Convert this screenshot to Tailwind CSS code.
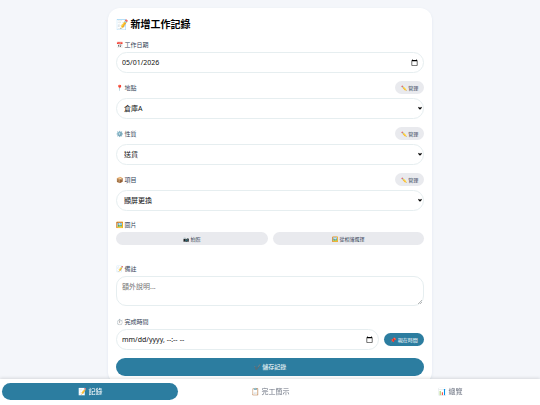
<!DOCTYPE html>
<html lang="zh-Hant">
  <head>
    <meta charset="UTF-8" />
    <title>工作記錄</title>
    <meta name="viewport" content="width=device-width, initial-scale=1" />
    <script src="https://cdn.jsdelivr.net/npm/@tailwindcss/browser@4"></script>
  </head>
  <body
    class="min-h-screen bg-[#f4f6fa] pt-2 font-['Noto_Sans','Noto_Sans_CJK_TC',sans-serif] text-[7px] leading-[10px] text-[#111111]"
  >
    <main
      class="mx-auto w-3/5 rounded-xl bg-white p-2 shadow-sm shadow-slate-200"
    >
      <h1 class="mb-2 text-[10px] leading-4 font-bold text-black">
        📝 新增工作記錄
      </h1>

      <form>
        <div class="mb-2">
          <label
            for="work-date"
            class="mb-0.5 block text-[6px] leading-[10px] text-[#334155]"
            >📅 工作日期</label
          >
          <input
            id="work-date"
            type="date"
            value="2026-05-01"
            class="h-[21px] w-full rounded-full border border-[#e6eef0] bg-white pr-[3px] pl-[5px] [&::-webkit-datetime-edit-day-field]:p-0 [&::-webkit-datetime-edit-month-field]:p-0 [&::-webkit-datetime-edit-year-field]:p-0"
          />
        </div>

        <div class="mb-2">
          <div class="mb-1 flex items-center justify-between">
            <label for="place" class="text-[6px] text-[#334155]">📍 地點</label>
            <button
              type="button"
              class="h-[13px] w-[29px] rounded-full bg-[#e9eaee] text-[5px] text-[#334155]"
            >
              ✏️ 管理
            </button>
          </div>
          <div class="relative">
            <select
              id="place"
              class="block h-[21px] w-full appearance-none rounded-full border border-[#e6eef0] bg-white px-[7px]"
            >
              <option>倉庫A</option>
            </select>
            <svg
              class="pointer-events-none absolute top-2 right-0.5 h-1 w-1"
              viewBox="0 0 8 8"
              fill="none"
              stroke="black"
              stroke-width="2.4"
              aria-hidden="true"
            >
              <path d="M1 2.5 4 5.8 7 2.5" />
            </svg>
          </div>
        </div>

        <div class="mb-2">
          <div class="mb-1 flex items-center justify-between">
            <label for="nature" class="text-[6px] text-[#334155]"
              >⚙️ 性質</label
            >
            <button
              type="button"
              class="h-[13px] w-[29px] rounded-full bg-[#e9eaee] text-[5px] text-[#334155]"
            >
              ✏️ 管理
            </button>
          </div>
          <div class="relative">
            <select
              id="nature"
              class="block h-[21px] w-full appearance-none rounded-full border border-[#e6eef0] bg-white px-[7px]"
            >
              <option>送貨</option>
            </select>
            <svg
              class="pointer-events-none absolute top-2 right-0.5 h-1 w-1"
              viewBox="0 0 8 8"
              fill="none"
              stroke="black"
              stroke-width="2.4"
              aria-hidden="true"
            >
              <path d="M1 2.5 4 5.8 7 2.5" />
            </svg>
          </div>
        </div>

        <div class="mb-[9px]">
          <div class="mb-1 flex items-center justify-between">
            <label for="item" class="text-[6px] text-[#334155]">📦 項目</label>
            <button
              type="button"
              class="h-[13px] w-[29px] rounded-full bg-[#e9eaee] text-[5px] text-[#334155]"
            >
              ✏️ 管理
            </button>
          </div>
          <div class="relative">
            <select
              id="item"
              class="block h-[21px] w-full appearance-none rounded-full border border-[#e6eef0] bg-white px-[7px]"
            >
              <option>顯屏更換</option>
            </select>
            <svg
              class="pointer-events-none absolute top-2 right-0.5 h-1 w-1"
              viewBox="0 0 8 8"
              fill="none"
              stroke="black"
              stroke-width="2.4"
              aria-hidden="true"
            >
              <path d="M1 2.5 4 5.8 7 2.5" />
            </svg>
          </div>
        </div>

        <div class="mb-[19px]">
          <p class="mb-0.5 text-[6px] leading-[10px] text-[#334155]">🖼️ 圖片</p>
          <div class="grid grid-cols-2 gap-[5px]">
            <button
              type="button"
              class="h-[13px] rounded-full bg-[#e9eaee] text-[5px] text-[#334155]"
            >
              📷 拍照
            </button>
            <button
              type="button"
              class="h-[13px] rounded-full bg-[#e9eaee] text-[5px] text-[#334155]"
            >
              🖼️ 從相簿選擇
            </button>
          </div>
        </div>

        <div class="mb-[11px]">
          <label
            for="note"
            class="mb-0.5 block text-[6px] leading-[10px] text-[#334155]"
            >📝 備註</label
          >
          <div class="relative">
            <textarea
              id="note"
              placeholder="額外說明..."
              class="block h-[30px] w-full resize-none rounded-[10px] border border-[#e6eef0] bg-white px-[5px] py-[5px] placeholder:text-[#757575]"
            ></textarea>
            <svg
              class="pointer-events-none absolute right-0.5 bottom-0.5 h-1 w-1"
              viewBox="0 0 8 8"
              stroke="#777777"
              aria-hidden="true"
            >
              <path d="M0 8 8 0M4 8 8 4" />
            </svg>
          </div>
        </div>

        <div class="mb-2">
          <label
            for="done-at"
            class="mb-0.5 block text-[6px] leading-[10px] text-[#334155]"
            >⏱️ 完成時間</label
          >
          <div class="flex items-center gap-[5px]">
            <input
              id="done-at"
              type="datetime-local"
              class="h-[21px] min-w-0 flex-1 rounded-full border border-[#e6eef0] bg-white pr-[3px] pl-[5px] [&::-webkit-datetime-edit-day-field]:p-0 [&::-webkit-datetime-edit-hour-field]:p-0 [&::-webkit-datetime-edit-minute-field]:p-0 [&::-webkit-datetime-edit-month-field]:p-0 [&::-webkit-datetime-edit-year-field]:p-0"
            />
            <button
              type="button"
              class="h-[13px] w-10 rounded-full bg-[#2c7da0] text-[5px] text-white"
            >
              📌 現在時間
            </button>
          </div>
        </div>

        <button
          type="submit"
          class="h-[18px] w-full rounded-full bg-[#2c7da0] text-[6px] text-white"
        >
          ✔️ 儲存記錄
        </button>
      </form>
    </main>

    <nav
      class="fixed inset-x-0 bottom-0 grid grid-cols-3 gap-1 bg-white px-0.5 pt-1 pb-[5px] shadow-[0_-1px_3px_rgba(0,0,0,0.12)]"
    >
      <button type="button" class="h-[17px] rounded-full bg-[#2c7da0] text-white">
        📝 記錄
      </button>
      <button type="button" class="h-[17px] rounded-full text-[#6b7280]">
        📋 完工簡示
      </button>
      <button type="button" class="h-[17px] rounded-full text-[#6b7280]">
        📊 總覽
      </button>
    </nav>
  </body>
</html>
